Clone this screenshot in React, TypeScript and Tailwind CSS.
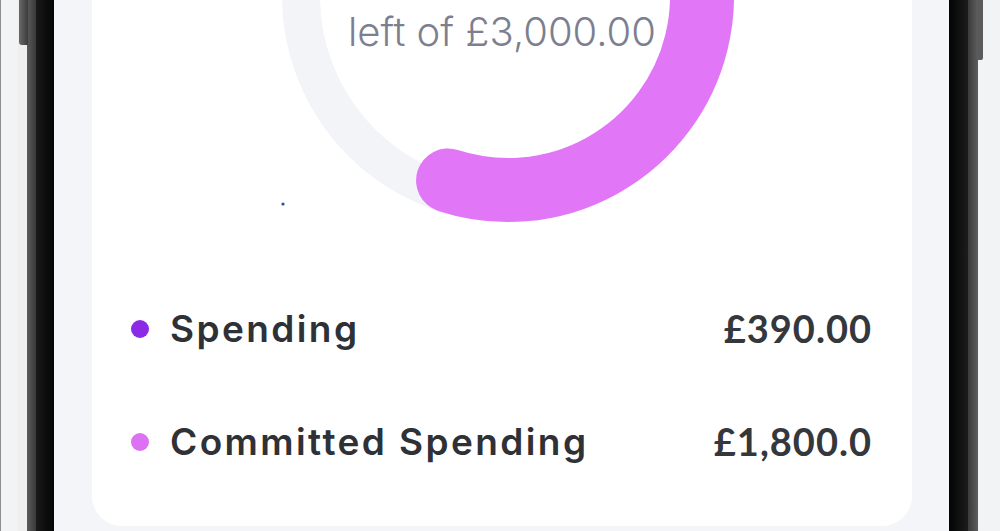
import React from "react";

type LegendItem = {
  label: string;
  amount: string;
  dot: string;
};

const legend: LegendItem[] = [
  { label: "Spending", amount: "£390.00", dot: "bg-[#8b2be6]" },
  { label: "Committed Spending", amount: "£1,800.0", dot: "bg-[#dc72f2]" },
];

// ring geometry, in card coordinates
const cx = 416;
const cy = -4;
const trackR = 207;
const arcR = 194;

const polar = (r: number, deg: number) => {
  const a = (deg * Math.PI) / 180;
  return [cx + r * Math.cos(a), cy + r * Math.sin(a)];
};

const Donut = () => {
  const [sx, sy] = polar(arcR, -80);
  const [ex, ey] = polar(arcR, 108);
  return (
    <div className="relative h-[272px] w-full">
      <svg width="820" height="272" className="absolute left-0 top-0">
        <circle cx={cx} cy={cy} r={trackR} fill="none" stroke="#f3f4f8" strokeWidth="38" />
        <path
          d={`M ${sx} ${sy} A ${arcR} ${arcR} 0 1 1 ${ex} ${ey}`}
          fill="none"
          stroke="#e177f6"
          strokeWidth="64"
          strokeLinecap="round"
        />
        <circle cx="191" cy="204" r="1.6" fill="#2d4aa8" />
      </svg>
      <div className="absolute left-0 right-0 top-[12px] flex justify-center">
        <span className="font-['Inter',sans-serif] text-[40px] font-light leading-none text-[#7d7f90]">
          left of £3,000.00
        </span>
      </div>
    </div>
  );
};

export default function App() {
  return (
    <div className="flex h-[531px] w-[1000px] overflow-hidden bg-[#f4f5f9]">
      {/* left side of the phone */}
      <div className="relative flex h-full shrink-0">
        <div className="h-full w-[1px] bg-[#8e8e8e]" />
        <div className="h-full w-[17px] bg-[#f2f3f5]" />
        <div className="h-full w-[9px] bg-[#eeeeef]" />
        <div className="h-full w-[9px] bg-gradient-to-r from-[#5a5a5a] to-[#3a3a3a]" />
        <div className="h-full w-[18px] bg-gradient-to-r from-[#1a1a1a] to-[#050505]" />
        <div className="absolute left-[19px] top-0 h-[45px] w-[9px] rounded-bl-[3px] bg-gradient-to-r from-[#6a6a6a] to-[#3c3c3c]" />
      </div>

      {/* screen */}
      <div className="flex h-full flex-1 pl-[38px] pr-[37px]">
        <div className="flex h-[526px] w-[820px] flex-col rounded-b-[30px] bg-white">
          <Donut />
          {legend.map((item) => (
            <div key={item.label} className="flex h-[113px] items-center justify-between pl-[39px] pr-[40px]">
              <div className="flex items-center gap-[21px]">
                <span className={`h-[18px] w-[18px] rounded-full ${item.dot}`} />
                <span className="font-['Inter',sans-serif] text-[37px] font-semibold tracking-[2.4px] text-[#2e3136]">
                  {item.label}
                </span>
              </div>
              <span className="font-['Lato',sans-serif] text-[38px] font-bold tracking-[1px] text-[#34373c]">
                {item.amount}
              </span>
            </div>
          ))}
        </div>
      </div>

      {/* right side of the phone */}
      <div className="relative flex h-full shrink-0">
        <div className="h-full w-[19px] bg-gradient-to-r from-[#050505] to-[#1c1c1c]" />
        <div className="h-full w-[10px] bg-gradient-to-r from-[#3a3a3a] to-[#5e5e5e]" />
        <div className="h-full w-[22px] bg-[#f2f3f5]" />
        <div className="absolute left-[29px] top-0 h-[60px] w-[5px] rounded-br-[2px] bg-[#5a5a5a]" />
      </div>
    </div>
  );
}
